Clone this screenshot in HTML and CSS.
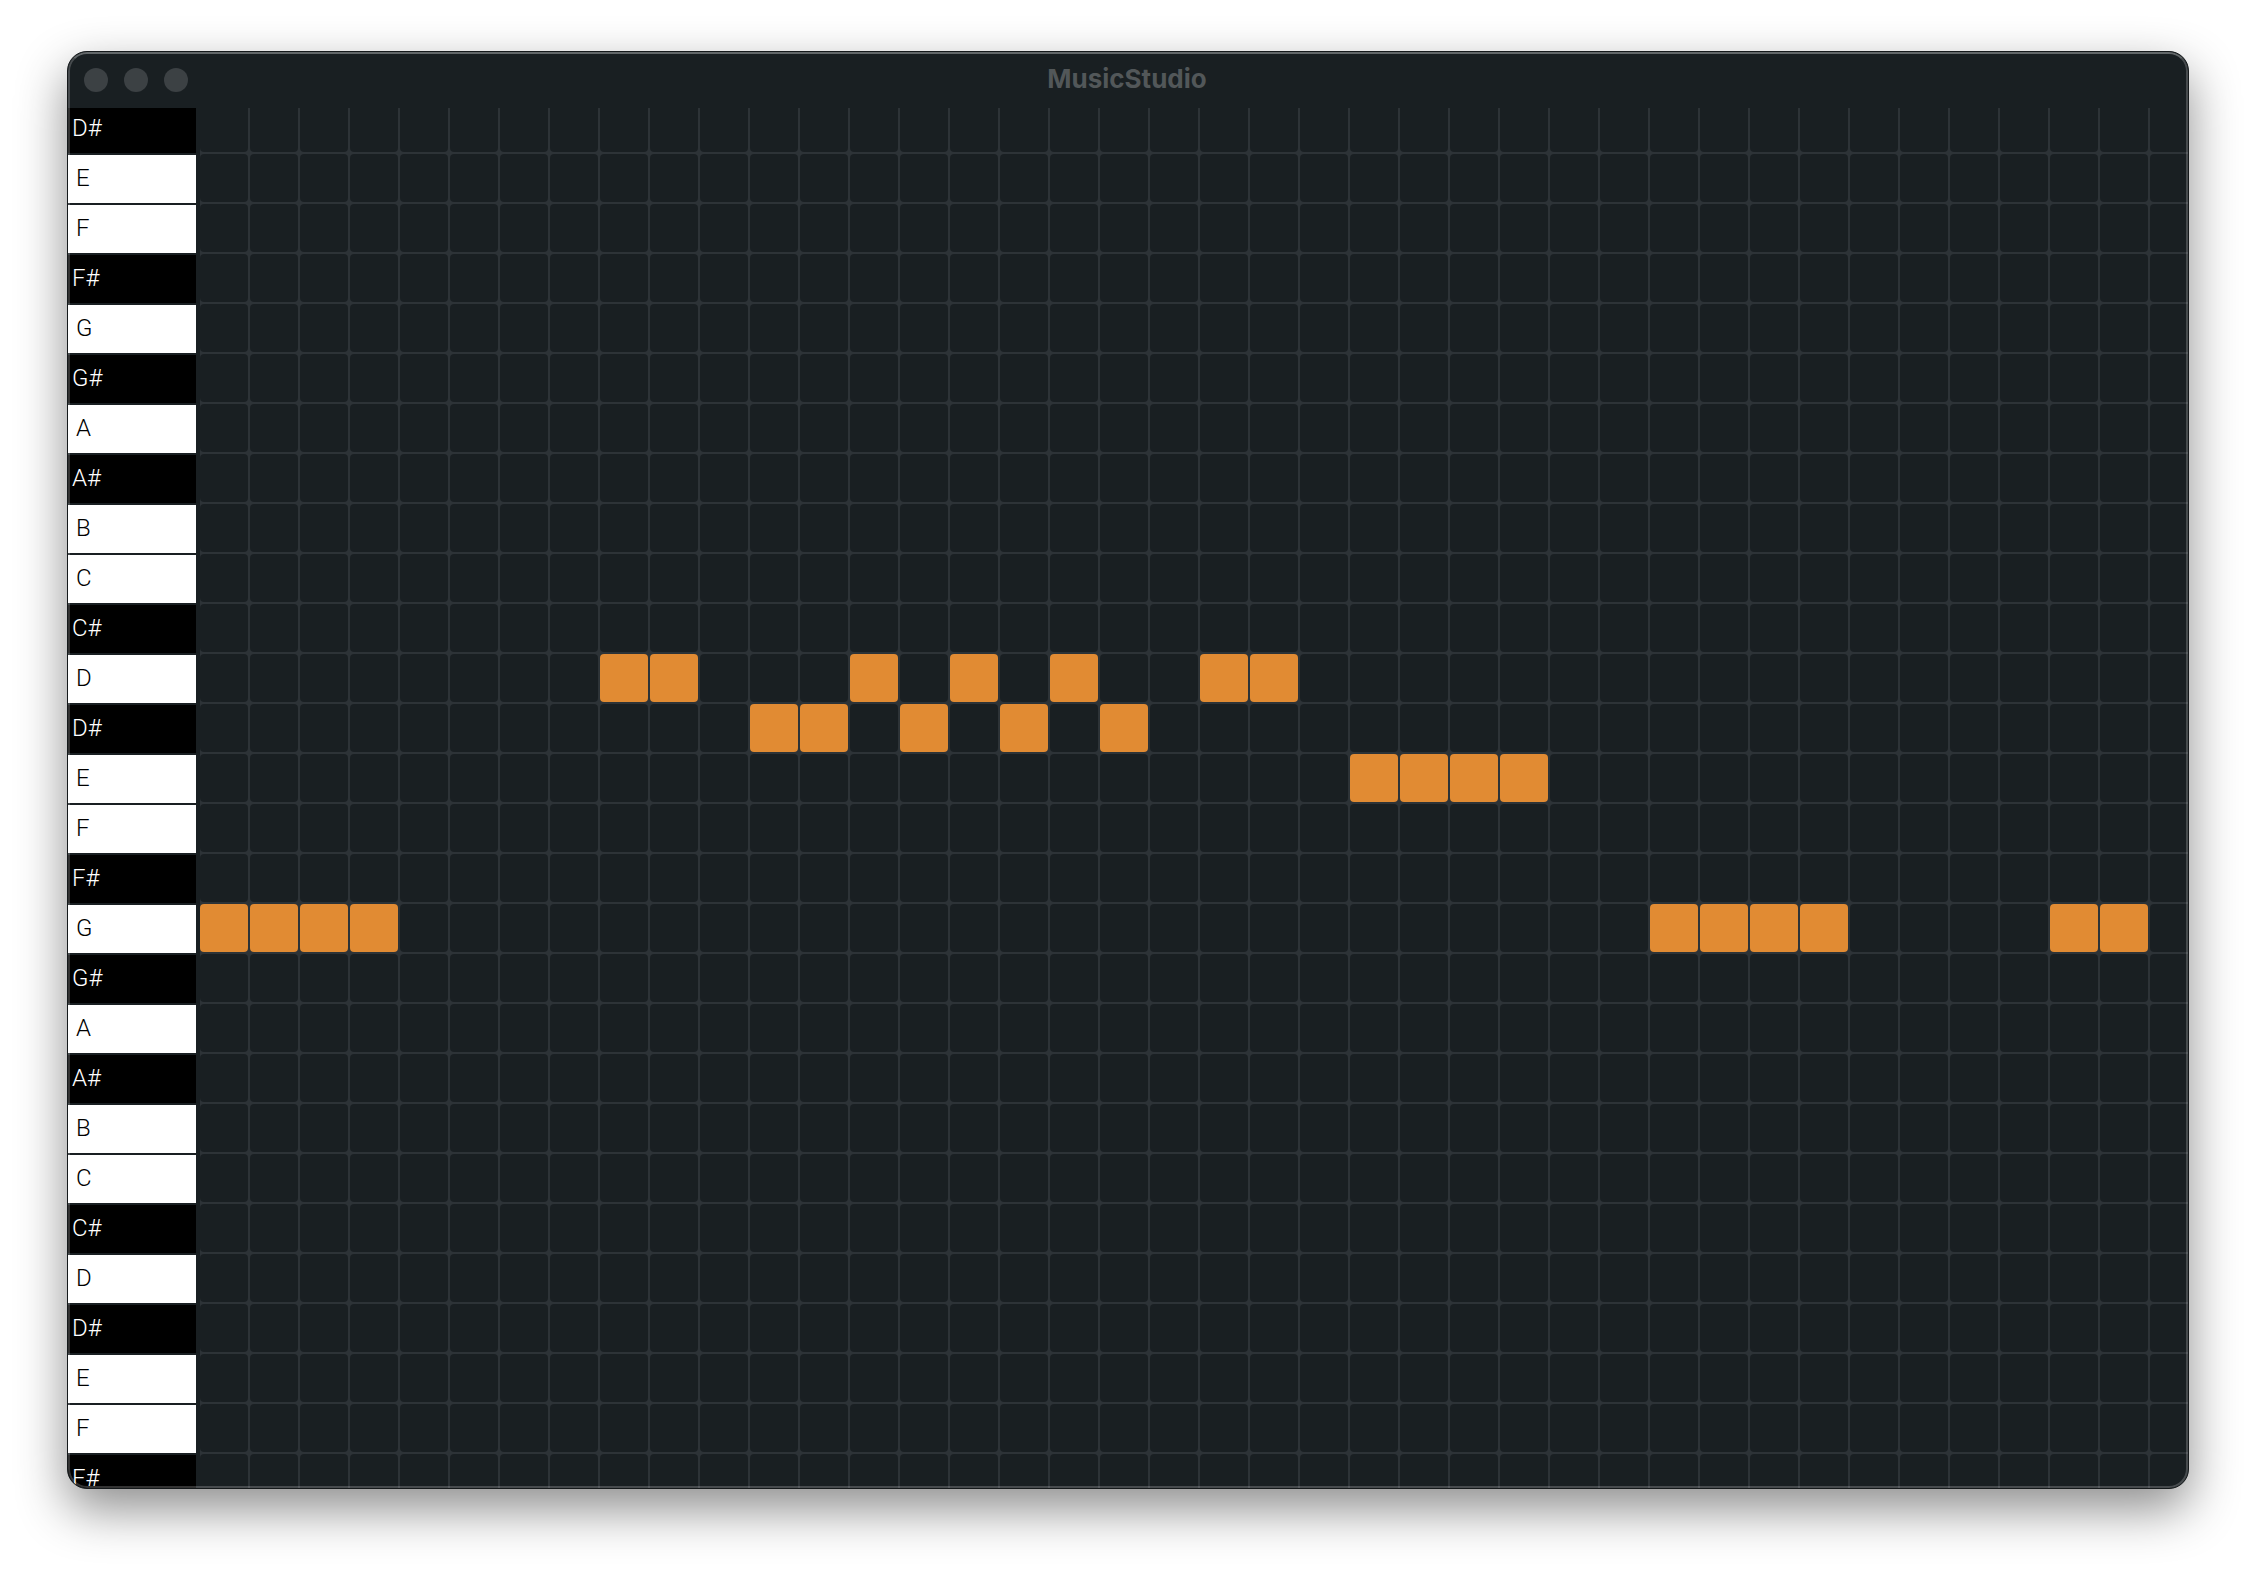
FILE: index.html
```html
<!DOCTYPE html>
<html lang="en">
<head>
<meta charset="utf-8">
<title>MusicStudio</title>
<link rel="stylesheet" href="styles.css">
</head>
<body>
<main class="window">
  <header class="titlebar">
    <div class="controls">
      <button class="dot" aria-label="Close"></button>
      <button class="dot" aria-label="Minimize"></button>
      <button class="dot" aria-label="Zoom"></button>
    </div>
    <h1 class="title">MusicStudio</h1>
  </header>
  <div class="roll">
    <div class="keys">
      <button class="key sharp">D#</button>
      <button class="key">E</button>
      <button class="key">F</button>
      <button class="key sharp">F#</button>
      <button class="key">G</button>
      <button class="key sharp">G#</button>
      <button class="key">A</button>
      <button class="key sharp">A#</button>
      <button class="key">B</button>
      <button class="key">C</button>
      <button class="key sharp">C#</button>
      <button class="key">D</button>
      <button class="key sharp">D#</button>
      <button class="key">E</button>
      <button class="key">F</button>
      <button class="key sharp">F#</button>
      <button class="key">G</button>
      <button class="key sharp">G#</button>
      <button class="key">A</button>
      <button class="key sharp">A#</button>
      <button class="key">B</button>
      <button class="key">C</button>
      <button class="key sharp">C#</button>
      <button class="key">D</button>
      <button class="key sharp">D#</button>
      <button class="key">E</button>
      <button class="key">F</button>
      <button class="key sharp">F#</button>
    </div>
    <div class="lanes">
      <button class="note" aria-label="D, step 9" style="grid-area: 12 / 9"></button>
      <button class="note" aria-label="D, step 10" style="grid-area: 12 / 10"></button>
      <button class="note" aria-label="D, step 14" style="grid-area: 12 / 14"></button>
      <button class="note" aria-label="D, step 16" style="grid-area: 12 / 16"></button>
      <button class="note" aria-label="D, step 18" style="grid-area: 12 / 18"></button>
      <button class="note" aria-label="D, step 21" style="grid-area: 12 / 21"></button>
      <button class="note" aria-label="D, step 22" style="grid-area: 12 / 22"></button>
      <button class="note" aria-label="D#, step 12" style="grid-area: 13 / 12"></button>
      <button class="note" aria-label="D#, step 13" style="grid-area: 13 / 13"></button>
      <button class="note" aria-label="D#, step 15" style="grid-area: 13 / 15"></button>
      <button class="note" aria-label="D#, step 17" style="grid-area: 13 / 17"></button>
      <button class="note" aria-label="D#, step 19" style="grid-area: 13 / 19"></button>
      <button class="note" aria-label="E, step 24" style="grid-area: 14 / 24"></button>
      <button class="note" aria-label="E, step 25" style="grid-area: 14 / 25"></button>
      <button class="note" aria-label="E, step 26" style="grid-area: 14 / 26"></button>
      <button class="note" aria-label="E, step 27" style="grid-area: 14 / 27"></button>
      <button class="note" aria-label="G, step 1" style="grid-area: 17 / 1"></button>
      <button class="note" aria-label="G, step 2" style="grid-area: 17 / 2"></button>
      <button class="note" aria-label="G, step 3" style="grid-area: 17 / 3"></button>
      <button class="note" aria-label="G, step 4" style="grid-area: 17 / 4"></button>
      <button class="note" aria-label="G, step 30" style="grid-area: 17 / 30"></button>
      <button class="note" aria-label="G, step 31" style="grid-area: 17 / 31"></button>
      <button class="note" aria-label="G, step 32" style="grid-area: 17 / 32"></button>
      <button class="note" aria-label="G, step 33" style="grid-area: 17 / 33"></button>
      <button class="note" aria-label="G, step 38" style="grid-area: 17 / 38"></button>
      <button class="note" aria-label="G, step 39" style="grid-area: 17 / 39"></button>
    </div>
  </div>
</main>
</body>
</html>
```

FILE: styles.css
```css
* {
  box-sizing: border-box;
}

body {
  margin: 0;
  height: 100vh;
  padding: 51px 67px 83px;
  display: flex;
  background: #fff;
  font-family: Roboto, "Liberation Sans", sans-serif;
}

button {
  margin: 0;
  padding: 0;
  border: 0;
  font: inherit;
}

.window {
  position: relative;
  flex: 1;
  min-width: 0;
  display: flex;
  flex-direction: column;
  overflow: hidden;
  border: 1px solid #15191b;
  border-radius: 20px;
  background: #191f22;
  box-shadow: 0 20px 50px rgba(0, 0, 0, 0.45);
}

/* light rim drawn over the window content */
.window::after {
  content: "";
  position: absolute;
  inset: 0;
  border: 2px solid rgba(255, 255, 255, 0.2);
  border-top-color: rgba(255, 255, 255, 0.32);
  border-radius: 19px;
  pointer-events: none;
}

.titlebar {
  flex: none;
  height: 56px;
  padding: 0 16px;
  display: grid;
  grid-template-columns: 1fr auto 1fr;
  align-items: center;
}

.controls {
  display: flex;
  gap: 16px;
}

.dot {
  width: 24px;
  height: 24px;
  border-radius: 50%;
  background: #3c4144;
}

.title {
  margin: 0;
  padding: 0 2px 2px 0;
  font-family: Inter, "Liberation Sans", sans-serif;
  font-size: 26px;
  line-height: 32px;
  font-weight: 700;
  color: #525759;
}

.roll {
  flex: 1;
  min-height: 0;
  display: flex;
  gap: 4px;
  overflow: hidden;
}

.keys {
  flex: none;
  width: 128px;
  margin-top: -3px;
  display: flex;
  flex-direction: column;
  gap: 2px;
}

.key {
  flex: none;
  height: 48px;
  padding: 0 8px 2px;
  background: #fff;
  color: #000;
  font-size: 24px;
  line-height: 46px;
  font-weight: 300;
  text-align: left;
}

.key.sharp {
  padding-left: 4px;
  background: #000;
  color: #fff;
}

/* one 50px tile: a 48px rounded cell and its 2px rule */
.lanes {
  flex: 1;
  min-width: 0;
  margin-top: -4px;
  display: grid;
  grid-auto-columns: 48px;
  grid-template-rows: repeat(28, 48px);
  gap: 2px;
  overflow: hidden;
  background: #2d3337 url("data:image/svg+xml,%3Csvg xmlns='http://www.w3.org/2000/svg' width='50' height='50'%3E%3Crect width='48' height='48' rx='4' fill='%23191f22'/%3E%3C/svg%3E") 0 0 / 50px 50px;
}

.note {
  border-radius: 4px;
  background: #e18b33;
}
```
